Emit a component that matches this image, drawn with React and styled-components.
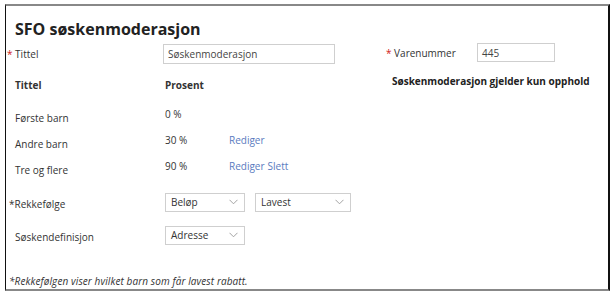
import React from "react";
import styled, { createGlobalStyle } from "styled-components";

const Global = createGlobalStyle`
  html, body { margin: 0; padding: 0; background: #fff; }
  body { font-family: "Open Sans", "Liberation Sans", sans-serif; color: #333; }
`;

const Panel = styled.div`
  box-sizing: border-box;
  margin: 4px 0 0 5px;
  width: 605px;
  height: 287px;
  border-top: 2px solid #888;
  border-bottom: 2px solid #888;
  border-left: 1px solid #111;
  border-right: 2px solid #111;
  display: flex;
  flex-direction: column;
`;

const Title = styled.h1`
  margin: 13px 0 0 9px;
  font-size: 16px;
  line-height: 20px;
  font-weight: 700;
  color: #222;
`;

const Top = styled.div`
  display: grid;
  grid-template-columns: 380px 1fr;
  margin-top: 5px;
`;

const Left = styled.div`
  padding-left: 9px;
`;

const Row = styled.div`
  display: grid;
  grid-template-columns: 150px 64px 1fr;
  align-items: ${(p) => p.$align || "start"};
  height: ${(p) => p.$h || 26}px;
  margin-top: ${(p) => p.$mt || 0}px;
  font-size: 10px;
  line-height: 14px;
`;

const Label = styled.div`
  margin-left: ${(p) => p.$shift || 0}px;
  padding-top: ${(p) => p.$pt || 0}px;
  color: #333;
  font-weight: ${(p) => (p.$bold ? 700 : 400)};
  white-space: nowrap;
`;

const Star = styled.span`
  color: #d02020;
`;

const Cell = styled.div`
  padding-top: ${(p) => p.$pt || 0}px;
  font-weight: ${(p) => (p.$bold ? 700 : 400)};
  white-space: nowrap;
  display: flex;
  gap: ${(p) => p.$gap || 0}px;
`;

const Link = styled.a`
  color: #5a7bc0;
  text-decoration: none;
  cursor: pointer;
`;

const Input = styled.div`
  box-sizing: border-box;
  width: ${(p) => p.$w}px;
  height: ${(p) => p.$h || 20}px;
  margin-left: ${(p) => p.$ml || 0}px;
  border: 1px solid #cfcfcf;
  padding: 2px 4px;
  font-size: 10px;
  line-height: 14px;
  color: #444;
  background: #fff;
`;

const Select = styled.div`
  box-sizing: border-box;
  width: ${(p) => p.$w}px;
  height: 19px;
  border: 1px solid #cfcfcf;
  padding: 1px 6px 0 5px;
  font-size: 10px;
  line-height: 14px;
  color: #333;
  display: flex;
  justify-content: space-between;
  align-items: flex-start;
  background: #fff;
  svg { margin-top: 4px; }
`;

const Selects = styled.div`
  display: flex;
  gap: 10px;
`;

const Chevron = () => (
  <svg width="9" height="6" viewBox="0 0 9 6">
    <path d="M0.5 0.8 L4.5 4.8 L8.5 0.8" fill="none" stroke="#999" strokeWidth="0.9" />
  </svg>
);

const Right = styled.div`
  font-size: 10px;
  line-height: 14px;
`;

const VareRow = styled.div`
  display: flex;
  align-items: center;
  height: 19px;
  margin-top: -1px;
`;

const VareLabel = styled.div`
  width: 91px;
  white-space: nowrap;
`;

const Note = styled.div`
  margin: 12px 0 0 6px;
  font-weight: 700;
  color: #222;
  white-space: nowrap;
`;

const Footer = styled.div`
  margin: auto 0 0 3px;
  padding-bottom: 1px;
  font-size: 10px;
  line-height: 13px;
  font-style: italic;
  color: #333;
  letter-spacing: 0.1px;
`;

const rows = [
  { name: "Første barn", pct: "0 %", links: [] },
  { name: "Andre barn", pct: "30 %", links: ["Rediger"] },
  { name: "Tre og flere", pct: "90 %", links: ["Rediger", "Slett"] },
];

export default function App() {
  return (
    <>
      <Global />
      <Panel>
        <Title>SFO søskenmoderasjon</Title>
        <Top>
          <Left>
            <Row $h={20} $align="center">
              <Label $shift={-8}>
                <Star>*</Star> Tittel
              </Label>
              <Input $w={172} $ml={-2}>Søskenmoderasjon</Input>
            </Row>
            <Row $h={20} $mt={11} $align="center">
              <Label $bold>Tittel</Label>
              <Cell $bold>Prosent</Cell>
            </Row>
            <div style={{ height: 6 }} />
            {rows.map((r) => (
              <Row key={r.name}>
                <Label $pt={10}>{r.name}</Label>
                <Cell $pt={6}>{r.pct}</Cell>
                <Cell $pt={6} $gap={3}>
                  {r.links.map((l) => (
                    <Link key={l}>{l}</Link>
                  ))}
                </Cell>
              </Row>
            ))}
            <Row $h={19} $mt={14} $align="center">
              <Label $shift={-6} $pt={3}>*Rekkefølge</Label>
              <Selects style={{ gridColumn: "2 / 4" }}>
                <Select $w={80}>Beløp<Chevron /></Select>
                <Select $w={96}>Lavest<Chevron /></Select>
              </Selects>
            </Row>
            <Row $h={19} $mt={14} $align="center">
              <Label $pt={3}>Søskendefinisjon</Label>
              <Selects style={{ gridColumn: "2 / 4" }}>
                <Select $w={80}>Adresse<Chevron /></Select>
              </Selects>
            </Row>
          </Left>
          <Right>
            <VareRow>
              <VareLabel>
                <Star>*</Star> Varenummer
              </VareLabel>
              <Input $w={78} $h={19}>445</Input>
            </VareRow>
            <Note>Søskenmoderasjon gjelder kun opphold</Note>
          </Right>
        </Top>
        <Footer>*Rekkefølgen viser hvilket barn som får lavest rabatt.</Footer>
      </Panel>
    </>
  );
}
